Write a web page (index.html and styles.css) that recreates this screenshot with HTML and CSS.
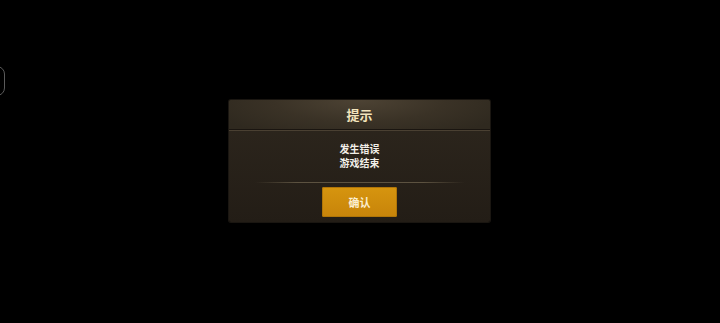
FILE: index.html
```html
<!DOCTYPE html>
<html lang="zh">
<head>
<meta charset="utf-8">
<link rel="stylesheet" href="styles.css">
</head>
<body>
<div class="edge-handle"></div>
<div class="stage">
  <div class="dialog">
    <div class="dialog-header">提示</div>
    <div class="dialog-body">
      <div class="message"><div class="line">发生错误</div><div class="line">游戏结束</div></div>
      <div class="divider"></div>
      <button class="confirm">确认</button>
    </div>
  </div>
</div>
</body>
</html>
```

FILE: styles.css
```css
html, body {
  margin: 0;
  padding: 0;
  background: #000;
  width: 720px;
  height: 323px;
  overflow: hidden;
  font-family: "Noto Sans CJK SC", "Noto Sans", sans-serif;
}
.edge-handle {
  position: absolute;
  left: -20px;
  top: 66px;
  width: 23px;
  height: 28px;
  border: 1.5px solid #5a5a5a;
  border-radius: 8px;
}
.stage {
  width: 720px;
  height: 323px;
  display: flex;
  align-items: center;
  justify-content: center;
}
.dialog {
  width: 261px;
  height: 122px;
  margin-top: -1px;
  margin-left: -1px;
  background: linear-gradient(180deg, #2e271e 0%, #231d16 100%);
  border-radius: 2px;
  box-shadow: 0 0 0 1px #1a1611;
  display: flex;
  flex-direction: column;
}
.dialog-header {
  height: 29px;
  line-height: 29px;
  text-align: center;
  color: #f3e4bc;
  font-size: 13px;
  font-weight: bold;
  background: radial-gradient(ellipse 60% 140% at 50% 0%, #4d4334 0%, #3a3226 55%, #2f291f 100%);
  border-bottom: 1px solid #1a1510;
  box-shadow: 0 1px 0 #4a4032;
  border-radius: 2px 2px 0 0;
}
.dialog-body {
  flex: 1;
  display: flex;
  flex-direction: column;
  align-items: center;
  padding-top: 12px;
}
.message {
  color: #f2efe8;
  font-size: 10px;
  font-weight: bold;
  text-align: center;
}
.line {
  height: 14px;
  line-height: 14px;
}
.divider {
  width: 210px;
  height: 1px;
  margin-top: 12px;
  background: linear-gradient(90deg, rgba(90,80,62,0) 0%, #5c5240 20%, #5c5240 80%, rgba(90,80,62,0) 100%);
}
.confirm {
  margin-top: 4px;
  width: 75px;
  height: 30px;
  border: none;
  border-radius: 2px;
  background: linear-gradient(180deg, #d6950f 0%, #c7840a 100%);
  box-shadow: inset 0 0 0 1px #b07508;
  color: #fbeed0;
  font-family: "Noto Sans CJK SC", "Noto Sans", sans-serif;
  font-size: 11px;
  font-weight: bold;
  padding: 0;
}
```
